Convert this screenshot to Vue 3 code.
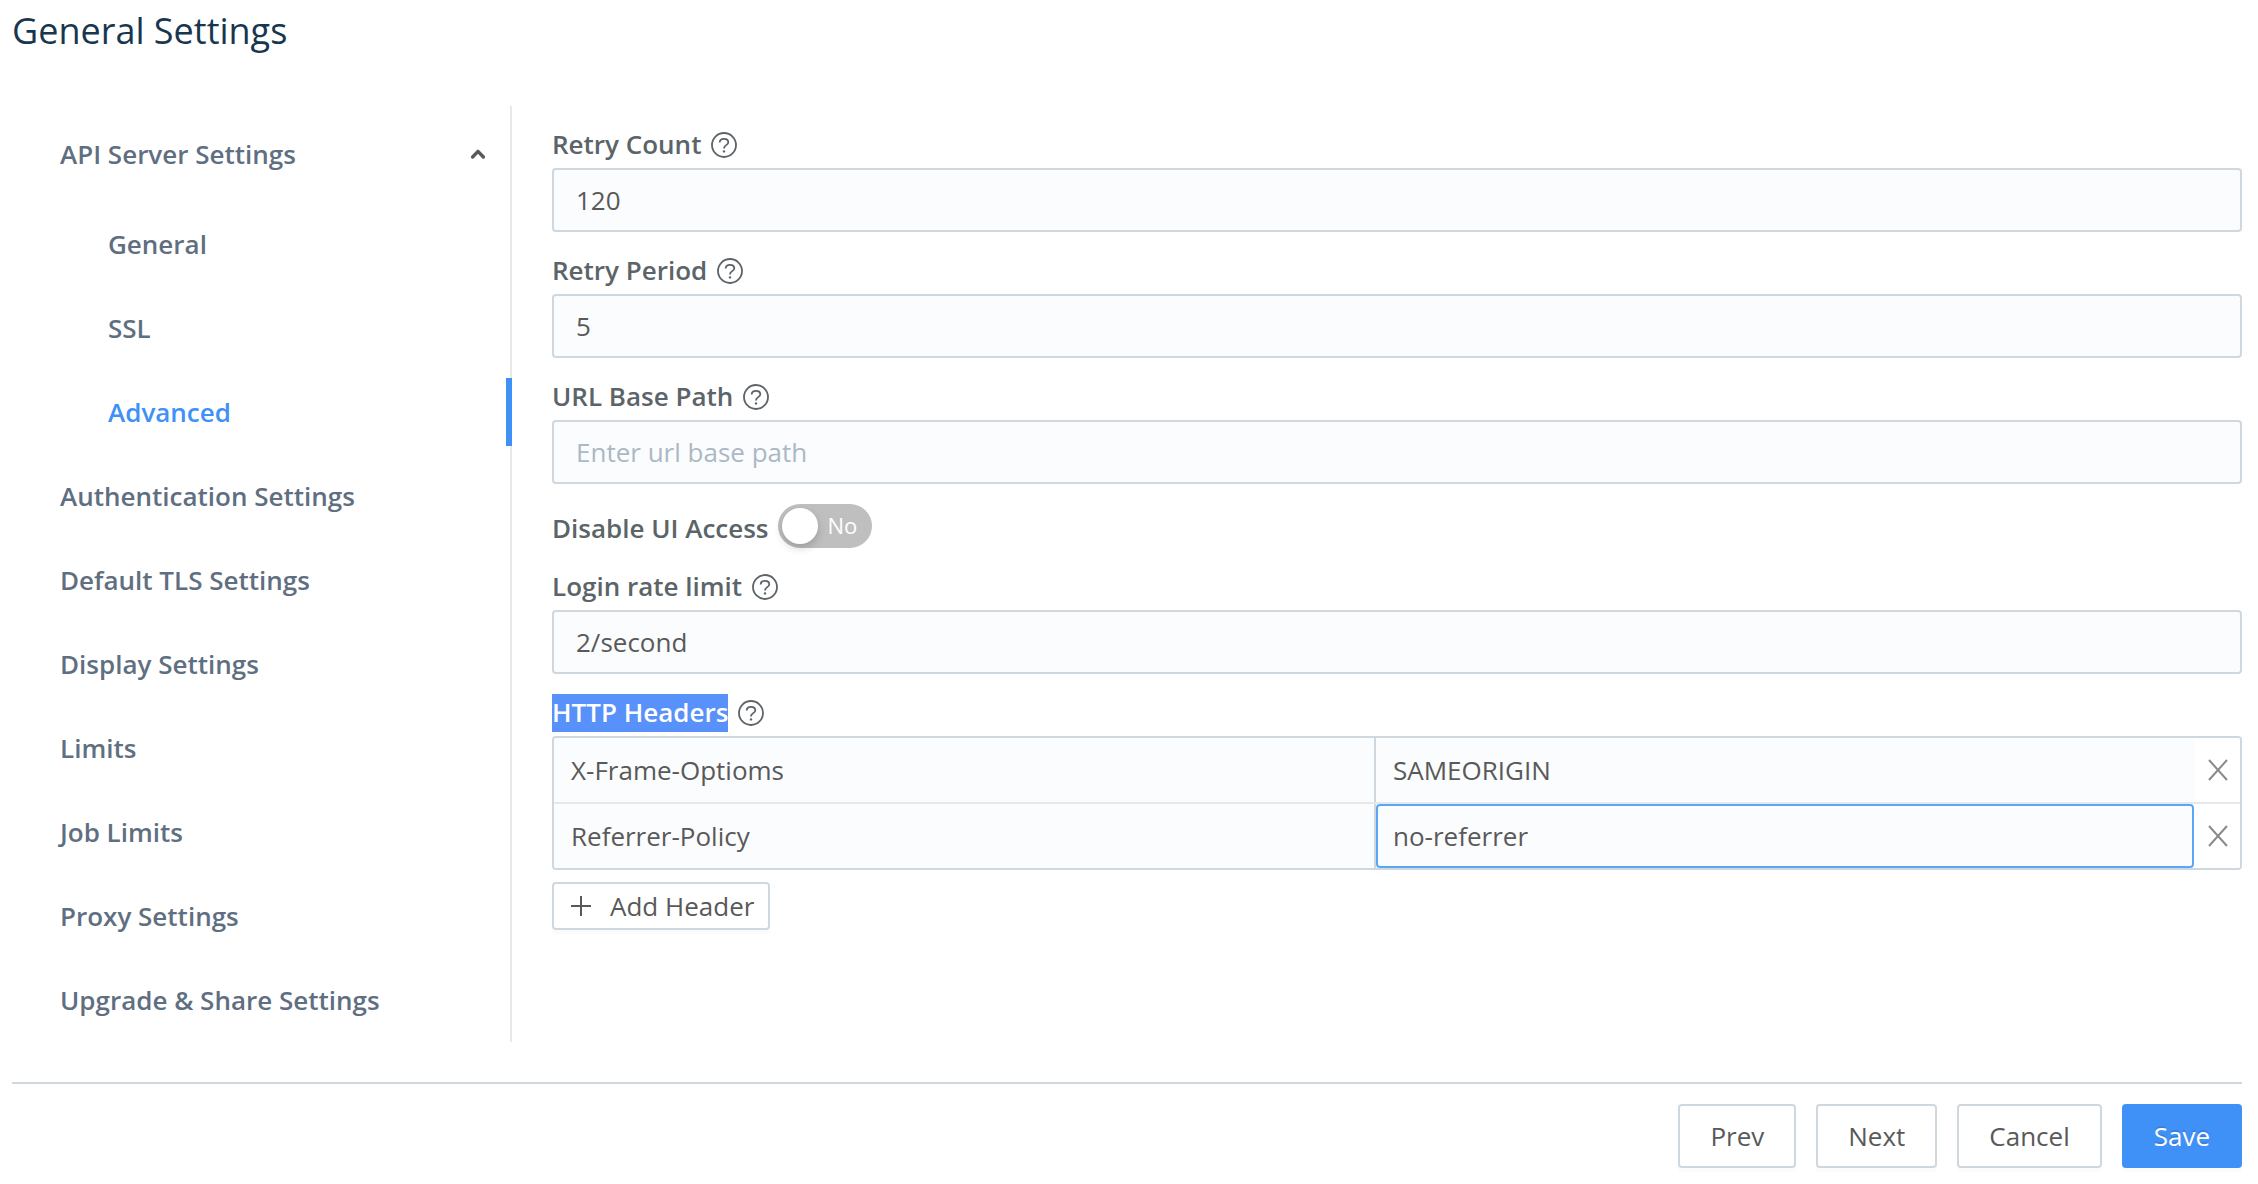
<template>
  <div class="settings-page">
    <h1 class="page-title">General Settings</h1>

    <div class="settings-body">
      <nav class="side-menu" aria-label="Settings sections">
        <button class="menu-item menu-group" :aria-expanded="apiOpen" @click="apiOpen = !apiOpen">
          <span>API Server Settings</span>
          <svg class="chevron" :class="{ closed: !apiOpen }" viewBox="0 0 16 12" width="16" height="12">
            <path
              d="M2.6 9 L8 3.4 L13.4 9"
              fill="none"
              stroke="currentColor"
              stroke-width="3.4"
              stroke-linecap="round"
              stroke-linejoin="round"
            />
          </svg>
        </button>
        <div v-if="apiOpen" class="sub-menu">
          <a
            v-for="item in apiItems"
            :key="item"
            href="#"
            class="menu-item sub-item"
            :class="{ active: item === current }"
            @click.prevent="current = item"
          >{{ item }}</a>
        </div>
        <a
          v-for="item in menuItems"
          :key="item"
          href="#"
          class="menu-item"
          :class="{ active: item === current }"
          @click.prevent="current = item"
        >{{ item }}</a>
      </nav>

      <form id="settings-form" class="settings-form" @submit.prevent>
        <template v-for="field in fields" :key="field.id">
          <div v-if="field.type === 'switch'" class="switch-row">
            <label class="field-label" :for="field.id">{{ field.label }}</label>
            <span class="switch">
              <input :id="field.id" v-model="field.value" type="checkbox" class="switch-input" />
              <span class="switch-text" :class="{ on: field.value }">{{ field.value ? 'Yes' : 'No' }}</span>
            </span>
          </div>
          <div v-else class="field">
            <div class="label-row">
              <label class="field-label" :for="field.id">{{ field.label }}</label>
              <svg class="help-icon" viewBox="0 0 26 26" width="26" height="26">
                <circle cx="13" cy="13" r="12" />
                <path d="M8.7 10.6 C8.7 8.2 10.5 6.9 13 6.9 C15.5 6.9 17.3 8.2 17.3 10.3 C17.3 11.8 16.3 12.6 15.1 13.2 C13.7 13.9 13 14.5 13 16.6" />
                <circle class="dot" cx="13" cy="19.4" r="1.2" />
              </svg>
            </div>
            <input
              :id="field.id"
              v-model="field.value"
              type="text"
              class="field-input"
              :placeholder="field.placeholder"
            />
          </div>
        </template>

        <div class="field" role="group" aria-labelledby="headers-label">
          <div class="label-row">
            <span id="headers-label" class="field-label selected">HTTP Headers</span>
            <svg class="help-icon" viewBox="0 0 26 26" width="26" height="26">
              <circle cx="13" cy="13" r="12" />
              <path d="M8.7 10.6 C8.7 8.2 10.5 6.9 13 6.9 C15.5 6.9 17.3 8.2 17.3 10.3 C17.3 11.8 16.3 12.6 15.1 13.2 C13.7 13.9 13 14.5 13 16.6" />
              <circle class="dot" cx="13" cy="19.4" r="1.2" />
            </svg>
          </div>
          <div class="header-list">
            <div v-for="(header, index) in headers" :key="index" class="header-row">
              <input v-model="header.name" type="text" class="header-input" aria-label="Header name" />
              <div class="header-value">
                <input
                  v-model="header.value"
                  type="text"
                  class="header-input"
                  :class="{ focused: index === focusedRow }"
                  aria-label="Header value"
                  @focus="focusedRow = index"
                />
              </div>
              <button type="button" class="remove-btn" aria-label="Remove header" @click="removeHeader(index)">
                <svg viewBox="0 0 20 22" width="20" height="22">
                  <path d="M1 1 L19 21 M19 1 L1 21" fill="none" stroke="currentColor" stroke-width="2" />
                </svg>
              </button>
            </div>
          </div>
          <button type="button" class="btn add-btn" @click="addHeader">
            <svg viewBox="0 0 20 20" width="20" height="20">
              <path d="M10 0 V20 M0 10 H20" fill="none" stroke="currentColor" stroke-width="2" />
            </svg>
            <span>Add Header</span>
          </button>
        </div>
      </form>
    </div>

    <footer class="page-footer">
      <button type="button" class="btn">Prev</button>
      <button type="button" class="btn">Next</button>
      <button type="button" class="btn">Cancel</button>
      <button type="submit" form="settings-form" class="btn primary">Save</button>
    </footer>
  </div>
</template>

<script setup>
import { ref } from 'vue'

const apiOpen = ref(true)
const current = ref('Advanced')

const apiItems = ['General', 'SSL', 'Advanced']
const menuItems = [
  'Authentication Settings',
  'Default TLS Settings',
  'Display Settings',
  'Limits',
  'Job Limits',
  'Proxy Settings',
  'Upgrade & Share Settings'
]

const fields = ref([
  { id: 'retry-count', label: 'Retry Count', value: '120' },
  { id: 'retry-period', label: 'Retry Period', value: '5' },
  { id: 'url-base-path', label: 'URL Base Path', value: '', placeholder: 'Enter url base path' },
  { id: 'disable-ui', type: 'switch', label: 'Disable UI Access', value: false },
  { id: 'login-rate', label: 'Login rate limit', value: '2/second' }
])

const headers = ref([
  { name: 'X-Frame-Optioms', value: 'SAMEORIGIN' },
  { name: 'Referrer-Policy', value: 'no-referrer' }
])
const focusedRow = ref(1)

const addHeader = () => {
  headers.value.push({ name: '', value: '' })
}

const removeHeader = (index) => {
  headers.value.splice(index, 1)
}
</script>

<style>
body {
  background: #fff;
}
</style>

<style scoped>
.settings-page,
.settings-page * {
  box-sizing: border-box;
}
.settings-page {
  padding: 8px 16px 16px 12px;
  font-family: "Open Sans", "Noto Sans", sans-serif;
  font-size: 26px;
  line-height: 36px;
  color: #595959;
}
button,
input {
  font: inherit;
  color: inherit;
  margin: 0;
}
button {
  cursor: pointer;
}
.page-title {
  margin: 0 0 52px;
  font-size: 36px;
  font-weight: 400;
  line-height: 46px;
  color: #19364f;
}
.settings-body {
  display: flex;
  gap: 40px;
}

/* side menu */
.side-menu {
  flex: none;
  width: 500px;
  padding: 14px 0 8px;
  box-shadow: inset -2px 0 0 #e8e8e8;
  display: flex;
  flex-direction: column;
  gap: 16px;
}
.menu-item {
  display: flex;
  align-items: center;
  height: 68px;
  padding: 0 0 0 48px;
  border: none;
  border-right: 6px solid transparent;
  background: none;
  color: #5f6f81;
  font-weight: 600;
  text-decoration: none;
}
.menu-group {
  justify-content: space-between;
  padding-right: 20px;
}
.chevron {
  color: #595959;
}
.chevron.closed {
  transform: rotate(180deg);
}
.sub-menu {
  display: flex;
  flex-direction: column;
  gap: 16px;
  padding-top: 6px;
}
.sub-item {
  padding-left: 96px;
}
.menu-item.active {
  color: #4091f7;
  border-right-color: #4091f7;
}

/* form */
.settings-form {
  flex: 1;
  min-width: 0;
  padding-top: 20px;
  display: flex;
  flex-direction: column;
  gap: 20px;
}
.label-row {
  display: flex;
  align-items: center;
  gap: 10px;
  margin-bottom: 4px;
}
.field-label {
  padding-bottom: 2px;
  font-weight: 600;
  line-height: 36px;
  color: #5b6468;
}
.field-label.selected {
  background: #5891f9;
  color: #fff;
}
.help-icon {
  fill: none;
  stroke: #5b6468;
  stroke-width: 1.8;
}
.help-icon .dot {
  fill: #5b6468;
  stroke: none;
}
.field-input {
  display: block;
  width: 100%;
  height: 64px;
  padding: 0 22px;
  border: 2px solid #cfd8df;
  border-radius: 4px;
  background: #fbfcfe;
  outline: none;
}
.field-input::placeholder {
  color: #abb8c5;
  opacity: 1;
}
.field-input:focus {
  border-color: #5aa7f8;
}
.switch-row {
  display: flex;
  align-items: flex-end;
  gap: 9px;
}
.switch {
  display: grid;
}
.switch-input {
  grid-area: 1 / 1;
  appearance: none;
  width: 94px;
  height: 44px;
  padding: 4px;
  border-radius: 22px;
  background: #bfbfbf;
  cursor: pointer;
}
.switch-input::before {
  content: "";
  display: block;
  width: 36px;
  height: 36px;
  border-radius: 50%;
  background: #fff;
  box-shadow: 0 4px 8px rgba(0, 35, 11, 0.2);
}
.switch-input:checked {
  background: #4091f7;
}
.switch-input:checked::before {
  margin-left: auto;
}
.switch-text {
  grid-area: 1 / 1;
  padding-left: 50px;
  font-size: 22px;
  line-height: 42px;
  color: #fff;
  pointer-events: none;
}
.switch-text.on {
  padding-left: 12px;
}

/* http headers */
.header-list {
  border: 2px solid #cfd8df;
  border-radius: 4px;
  overflow: hidden;
}
.header-row {
  display: grid;
  grid-template-columns: 1fr 1fr 46px;
}
.header-row + .header-row {
  border-top: 2px solid #e6e8ea;
}
.header-input {
  display: block;
  width: 100%;
  height: 64px;
  padding: 0 15px;
  border: 2px solid transparent;
  border-radius: 4px;
  background: #fbfcfe;
  outline: none;
}
.header-input.focused {
  border-color: #5aa7f8;
}
.header-value {
  border-left: 2px solid #cfd8df;
}
.remove-btn {
  display: flex;
  align-items: center;
  justify-content: center;
  padding: 0 0 0 2px;
  border: none;
  background: #fff;
  color: #8a8a8a;
}

/* buttons */
.btn {
  height: 64px;
  padding: 0 30px;
  border: 2px solid #cfd8df;
  border-radius: 4px;
  background: #fff;
  box-shadow: 0 4px 0 rgba(0, 0, 0, 0.016);
}
.btn.primary {
  border-color: #4091f7;
  background: #4091f7;
  color: #fff;
  text-shadow: 0 -2px 0 rgba(0, 0, 0, 0.12);
}
.add-btn {
  display: flex;
  align-items: center;
  gap: 19px;
  height: 48px;
  margin-top: 12px;
  padding: 0 14px 0 17px;
}
.page-footer {
  display: flex;
  justify-content: flex-end;
  gap: 20px;
  margin-top: 40px;
  padding-top: 20px;
  border-top: 2px solid #cfd8df;
}
</style>
